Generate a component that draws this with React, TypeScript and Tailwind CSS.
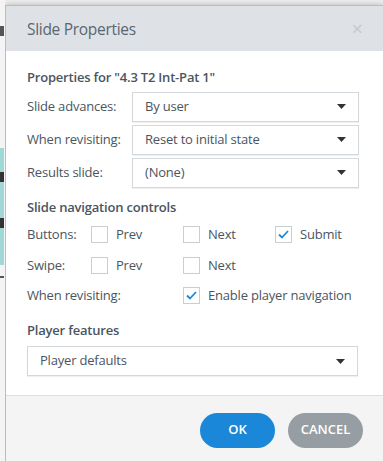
import React from 'react';

const font = { fontFamily: '"Open Sans", "Noto Sans", sans-serif' };

function Caret() {
  return (
    <svg width="9" height="5" viewBox="0 0 9 5" className="shrink-0">
      <path d="M0 0h9L4.5 5z" fill="#333" />
    </svg>
  );
}

function Select({ value, className = '' }: { value: string; className?: string }) {
  return (
    <div className={`flex h-[30px] items-center justify-between border border-[#d3d8dc] bg-white pl-[12px] pr-[12px] shadow-[0_1px_1px_rgba(0,0,0,0.06)] ${className}`}>
      <span className="text-[13px] tracking-[-0.2px] text-[#4a5560]">{value}</span>
      <Caret />
    </div>
  );
}

function Check({ checked, label }: { checked?: boolean; label: string }) {
  return (
    <div className="flex items-center gap-[8px]">
      <div className="flex h-[17px] w-[17px] items-center justify-center border border-[#c9ced3] bg-white">
        {checked && (
          <svg width="11" height="9" viewBox="0 0 11 9">
            <path d="M1 4.5l3 3L10 1" stroke="#1e88d8" strokeWidth="1.8" fill="none" />
          </svg>
        )}
      </div>
      <span className="text-[13px] tracking-[-0.2px] text-[#4a5560]">{label}</span>
    </div>
  );
}

export default function App() {
  const rows = [
    { label: 'Slide advances:', value: 'By user' },
    { label: 'When revisiting:', value: 'Reset to initial state' },
    { label: 'Results slide:', value: '(None)' },
  ];

  return (
    <div className="flex h-[461px] w-[383px] overflow-hidden bg-[#eeeeee]" style={font}>
      {/* page behind the dialog */}
      <div className="relative w-[5px] shrink-0 bg-[#f4f4f4]">
        <div className="absolute left-0 top-[26px] h-[10px] w-[4px] bg-[#555]" />
        <div className="absolute left-0 top-[148px] h-[117px] w-[4px] bg-[#9fd8d6]" />
        <div className="absolute left-0 top-[172px] h-[10px] w-[4px] bg-[#333]" />
        <div className="absolute left-0 top-[218px] h-[10px] w-[4px] bg-[#333]" />
        <div className="absolute left-0 top-[276px] h-[2px] w-[4px] bg-[#555]" />
      </div>

      <div className="mt-[5px] flex flex-1 flex-col border-l border-t border-[#b9bdc1] bg-white shadow-[0_0_6px_rgba(0,0,0,0.25)]">
        {/* header */}
        <div className="flex h-[45px] shrink-0 items-center justify-between bg-[#dee2e6] pl-[21px] pr-[20px]">
          <span className="pt-[2px] text-[15.5px] tracking-[-0.3px] text-[#5a6670]">Slide Properties</span>
          <span className="text-[20px] leading-none text-[#c4c9cd]">×</span>
        </div>

        {/* body */}
        <div className="flex flex-1 flex-col px-[21px] pt-[17px]">
          <div className="text-[13px] font-semibold tracking-[-0.2px] text-[#4a5560]">Properties for "4.3 T2 Int-Pat 1"</div>

          <div className="mt-[4px] flex flex-col gap-[3px]">
            {rows.map(r => (
              <div key={r.label} className="flex items-center">
                <span className="w-[105px] text-[13px] tracking-[-0.2px] text-[#4a5560]">{r.label}</span>
                <Select value={r.value} className="w-[227px]" />
              </div>
            ))}
          </div>

          <div className="mt-[10px] text-[13px] font-semibold tracking-[-0.2px] text-[#4a5560]">Slide navigation controls</div>

          <div className="mt-[8px] flex flex-col gap-[11px]">
            <div className="flex items-center">
              <span className="w-[64px] text-[13px] tracking-[-0.2px] text-[#4a5560]">Buttons:</span>
              <div className="w-[92px]"><Check label="Prev" /></div>
              <div className="w-[92px]"><Check label="Next" /></div>
              <Check checked label="Submit" />
            </div>
            <div className="flex items-center">
              <span className="w-[64px] text-[13px] tracking-[-0.2px] text-[#4a5560]">Swipe:</span>
              <div className="w-[92px]"><Check label="Prev" /></div>
              <Check label="Next" />
            </div>
            <div className="flex items-center">
              <span className="w-[156px] text-[13px] tracking-[-0.2px] text-[#4a5560]">When revisiting:</span>
              <Check checked label="Enable player navigation" />
            </div>
          </div>

          <div className="mt-[15px] text-[13px] font-semibold tracking-[-0.2px] text-[#4a5560]">Player features</div>
          <Select value="Player defaults" className="mt-[6px] w-[331px]" />
        </div>

        {/* footer */}
        <div className="flex h-[66px] shrink-0 items-center justify-end gap-[13px] border-t border-[#dcdfe2] bg-[#f4f4f4] pr-[20px]">
          <button className="mt-[3px] h-[35px] w-[75px] rounded-full bg-[#1a87d9] text-[13px] font-semibold text-white">OK</button>
          <button className="mt-[3px] h-[35px] w-[75px] rounded-full bg-[#969ea4] text-[13px] font-semibold text-white">CANCEL</button>
        </div>
      </div>
    </div>
  );
}
